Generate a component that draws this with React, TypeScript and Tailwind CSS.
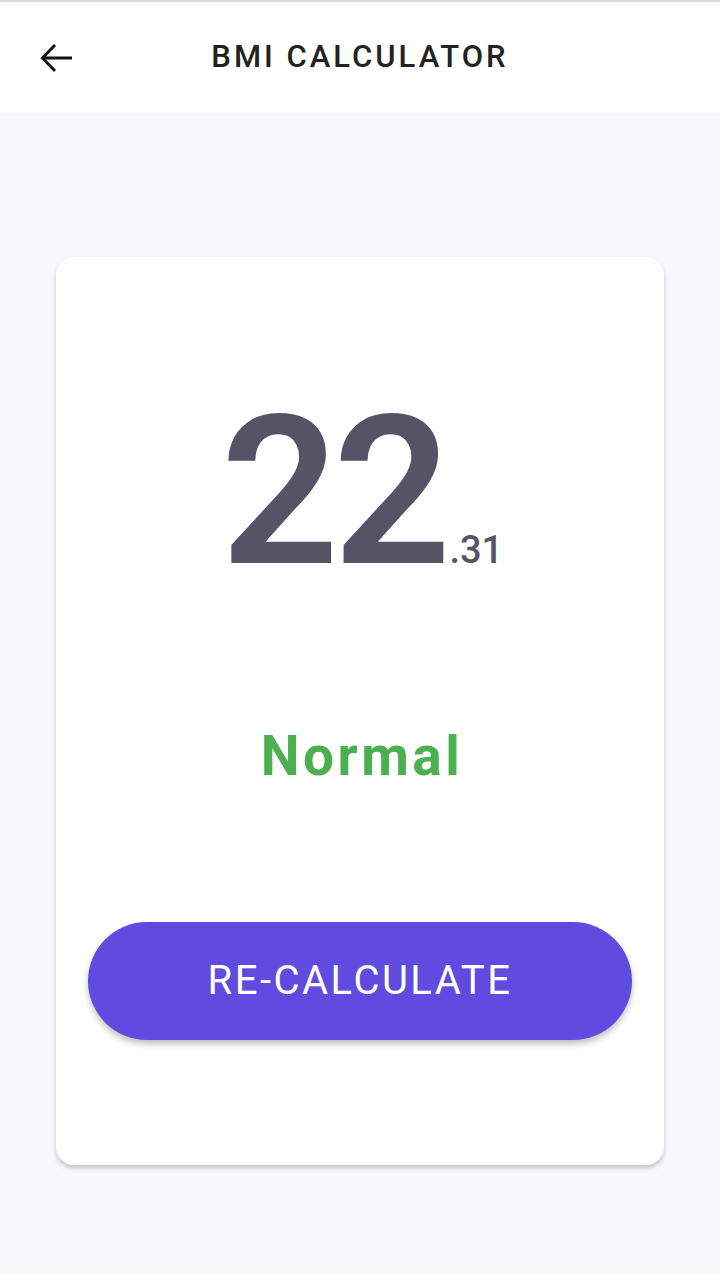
export default function App() {
  return (
    <div className="w-[720px] h-[1274px] flex flex-col bg-[#f8f8fd] font-['Roboto',sans-serif]">
      {/* top bar */}
      <header className="h-[113px] bg-white border-t-2 border-[#dcdcdc] flex items-center relative">
        <button className="ml-[40px] w-[32px] h-[30px] flex items-center justify-center">
          <svg width="32" height="30" viewBox="0 0 32 30" fill="none" stroke="#111" strokeWidth="3">
            <path d="M2.5 15H32" />
            <path d="M15 2 2.5 15 15 28" strokeLinejoin="miter" />
          </svg>
        </button>
        <h1 className="absolute left-0 right-0 text-center text-[31px] font-medium tracking-[3px] text-[#222] pointer-events-none">
          BMI CALCULATOR
        </h1>
      </header>

      <main className="flex-1 px-[56px] pt-[144px]">
        <div className="h-[908px] bg-white rounded-[18px] shadow-[0_3px_5px_rgba(0,0,0,0.22)] flex flex-col items-center">
          <div className="mt-[132px] flex items-baseline text-[#555467] pl-[4px]">
            <span className="text-[207px] font-semibold leading-none tracking-[-6px]">22</span>
            <span className="text-[38px] font-medium leading-none ml-[4px]">.31</span>
          </div>
          <div className="mt-[133px] text-[55px] font-bold text-[#4caf50] leading-none tracking-[3.5px] pl-[4px]">Normal</div>
          <button className="mt-[138px] w-[544px] h-[118px] rounded-full bg-[#5f4bdf] text-white text-[40px] tracking-[2.5px] shadow-[0_4px_6px_rgba(0,0,0,0.25)]">
            RE-CALCULATE
          </button>
        </div>
      </main>
    </div>
  );
}
